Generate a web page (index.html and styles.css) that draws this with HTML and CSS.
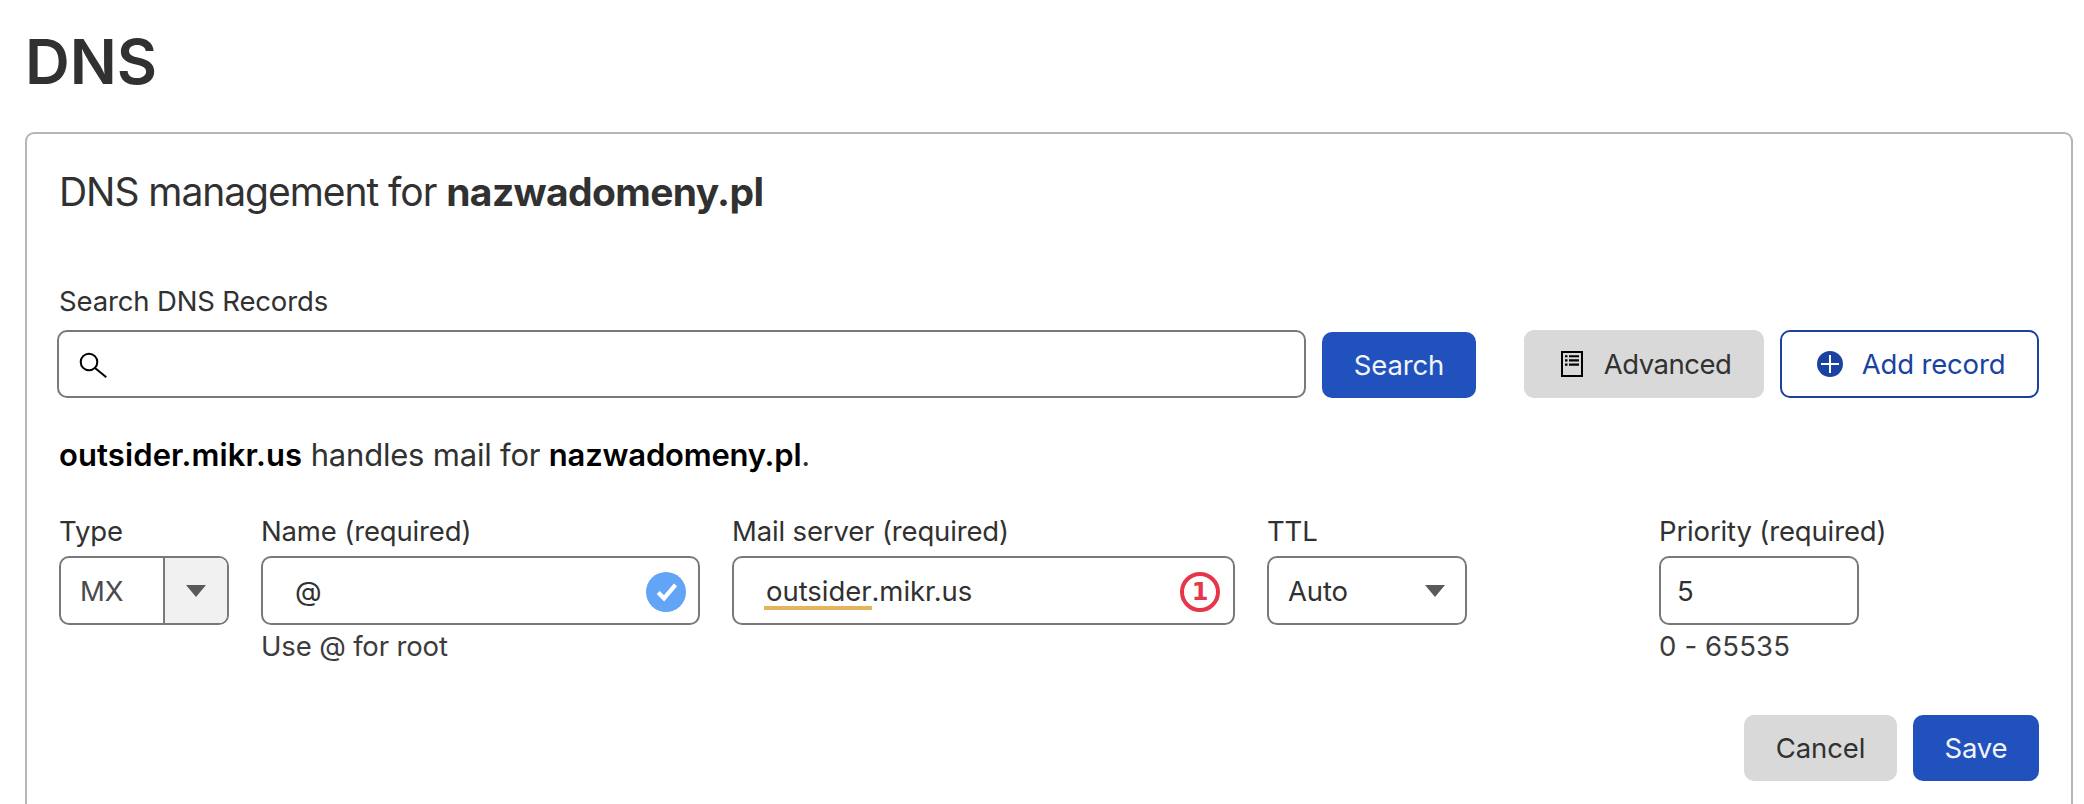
FILE: index.html
```html
<!DOCTYPE html>
<html lang="en">
<head>
<meta charset="utf-8">
<title>DNS</title>
<link rel="stylesheet" href="styles.css">
</head>
<body>
<h1 class="page-title">DNS</h1>
<main class="card">
  <h2 class="card-title">DNS management for <strong>nazwadomeny.pl</strong></h2>

  <div class="label">Search DNS Records</div>
  <div class="toolbar">
    <div class="search-input">
      <svg class="search-icon" width="30" height="30" viewBox="0 0 30 30" fill="none" stroke="#000" stroke-width="2"><circle cx="11" cy="11" r="8.3"/><path d="M17 17 28.3 26.3"/></svg>
    </div>
    <button class="btn btn-primary btn-search">Search</button>
    <button class="btn btn-grey btn-advanced">
      <svg width="22" height="26" viewBox="0 0 22 26"><rect x="1" y="1" width="20" height="24" fill="none" stroke="#000" stroke-width="2"/><path d="M4 5.2h2.5M8 5.2h10M4 9.4h2.5M8 9.4h10M4 13.6h2.5M8 13.6h10" stroke="#000" stroke-width="2.1" fill="none"/></svg>
      <span>Advanced</span>
    </button>
    <button class="btn btn-outline btn-add">
      <svg width="26" height="26" viewBox="0 0 26 26"><circle cx="13" cy="13" r="13" fill="#1a43a1"/><path d="M13 4v18M4 13h18" stroke="#fff" stroke-width="2"/></svg>
      <span>Add record</span>
    </button>
  </div>

  <p class="summary"><strong class="server">outsider.mikr.us</strong> handles mail for <strong>nazwadomeny.pl</strong>.</p>

  <div class="fields">
    <div class="field field-type">
      <div class="label">Type</div>
      <div class="box box-type">
        <span class="type-value">MX</span>
        <span class="type-toggle"><svg width="20" height="12" viewBox="0 0 20 12"><path d="M0 0h20L10 12z" fill="#595959"/></svg></span>
      </div>
    </div>
    <div class="field field-name">
      <div class="label">Name (required)</div>
      <div class="box box-text">
        <span>@</span>
        <svg class="status" width="40" height="40" viewBox="0 0 40 40"><circle cx="20" cy="20" r="20" fill="#62a5f6"/><path d="M12.2 20.5 18 26.3 29.5 12.8" fill="none" stroke="#fff" stroke-width="4.2"/></svg>
      </div>
      <div class="hint">Use @ for root</div>
    </div>
    <div class="field field-server">
      <div class="label">Mail server (required)</div>
      <div class="box box-text box-server">
        <span><span class="spell">outsider</span>.mikr.us</span>
        <span class="status count">1</span>
      </div>
    </div>
    <div class="field field-ttl">
      <div class="label">TTL</div>
      <div class="box box-select">
        <span>Auto</span>
        <svg width="20" height="12" viewBox="0 0 20 12"><path d="M0 0h20L10 12z" fill="#595959"/></svg>
      </div>
    </div>
    <div class="field field-priority">
      <div class="label">Priority (required)</div>
      <div class="box box-priority">5</div>
      <div class="hint hint-range">0 - 65535</div>
    </div>
  </div>

  <div class="actions">
    <button class="btn btn-grey btn-cancel">Cancel</button>
    <button class="btn btn-primary btn-save">Save</button>
  </div>
</main>
</body>
</html>
```
FILE: styles.css
```css
* {
  box-sizing: border-box;
}

body {
  display: flex;
  flex-direction: column;
  height: 804px;
  margin: 0;
  padding: 22px 11px 0 25px;
  overflow: hidden;
  background: #fff;
  color: #313131;
  font: 400 27.5px/36px Inter, "Liberation Sans", sans-serif;
  letter-spacing: -0.15px;
}

.page-title {
  margin: 0 0 30px;
  font-size: 62px;
  font-weight: 600;
  line-height: 80px;
  letter-spacing: 0;
}

.card {
  flex: 1;
  padding: 34px 32px 0;
  border: 2px solid #b6b6b6;
  border-bottom: 0;
  border-radius: 9px 9px 0 0;
}

.card-title {
  margin: 0 0 67px;
  font-size: 39px;
  font-weight: 400;
  line-height: 48px;
  letter-spacing: -1.05px;
}

.card-title strong {
  font-weight: 700;
  letter-spacing: -0.64px;
}

.label,
.hint {
  white-space: nowrap;
}

.toolbar {
  display: flex;
  align-items: flex-end;
  margin: 11px 0 35px -2px;
}

.search-input {
  display: flex;
  align-items: center;
  width: 1249px;
  height: 68px;
  padding-left: 19px;
  border: 2px solid #797979;
  border-radius: 10px;
}

.search-icon {
  margin-top: 4px;
}

.btn {
  display: flex;
  align-items: center;
  justify-content: center;
  height: 66px;
  padding: 0;
  border: 0;
  border-radius: 10px;
  font: inherit;
  letter-spacing: inherit;
}

.btn-primary {
  background: #2151bd;
  color: #f2f4fb;
}

.btn-grey {
  background: #d9d9d9;
  color: #313131;
}

.btn-outline {
  border: 2px solid #1a43a1;
  background: #fff;
  color: #1a43a1;
}

.btn-search {
  width: 154px;
  margin: 0 48px 0 16px;
}

.btn-advanced {
  gap: 21px;
  width: 240px;
  height: 68px;
  padding-left: 4px;
  letter-spacing: -0.5px;
}

.btn-add {
  gap: 19px;
  width: 259px;
  height: 68px;
  margin-left: 16px;
  padding-left: 3px;
}

.summary {
  margin: 0 0 36px;
  font-size: 31px;
  line-height: 44px;
  letter-spacing: -0.2px;
}

.summary strong {
  color: #000;
  font-weight: 600;
}

.summary .server {
  letter-spacing: 0.1px;
}

.fields {
  display: flex;
  gap: 32px;
}

.field-type { width: 170px; }
.field-name { width: 439px; }
.field-server { width: 503px; }
.field-ttl { width: 200px; }
.field-priority { width: 200px; margin-left: 160px; }

.box {
  display: flex;
  align-items: center;
  height: 69px;
  margin-top: 7px;
  border: 2px solid #797979;
  border-radius: 10px;
  overflow: hidden;
}

.box-type {
  align-items: stretch;
  color: #4a4a4a;
}

.type-value {
  width: 102px;
  padding-left: 19px;
  line-height: 66px;
}

.type-toggle {
  display: flex;
  flex: 1;
  align-items: center;
  justify-content: center;
  border-left: 2px solid #797979;
  background: #f1f1f1;
}

.box-text {
  justify-content: space-between;
  padding: 0 12px 0 32px;
}

.box-server {
  padding-right: 13px;
  letter-spacing: -0.05px;
}

.status {
  margin-top: 3px;
}

.spell {
  position: relative;
}

.spell::after {
  content: "";
  position: absolute;
  right: -1px;
  bottom: -2px;
  left: -2px;
  height: 4px;
  background: #e6b45a;
}

.count {
  display: flex;
  align-items: center;
  justify-content: center;
  width: 40px;
  height: 40px;
  border: 4px solid #e5364c;
  border-radius: 50%;
  color: #e5364c;
  font: 700 24px/32px "DejaVu Sans", sans-serif;
}

.box-select {
  justify-content: space-between;
  padding: 0 20px 0 19px;
}

.box-priority {
  padding-left: 16px;
}

.hint {
  margin-top: 3px;
  color: #3c3c3c;
}

.hint-range {
  letter-spacing: 0.15px;
}

.actions {
  display: flex;
  justify-content: flex-end;
  gap: 16px;
  margin-top: 51px;
}

.btn-cancel { width: 153px; }
.btn-save { width: 126px; }
```
